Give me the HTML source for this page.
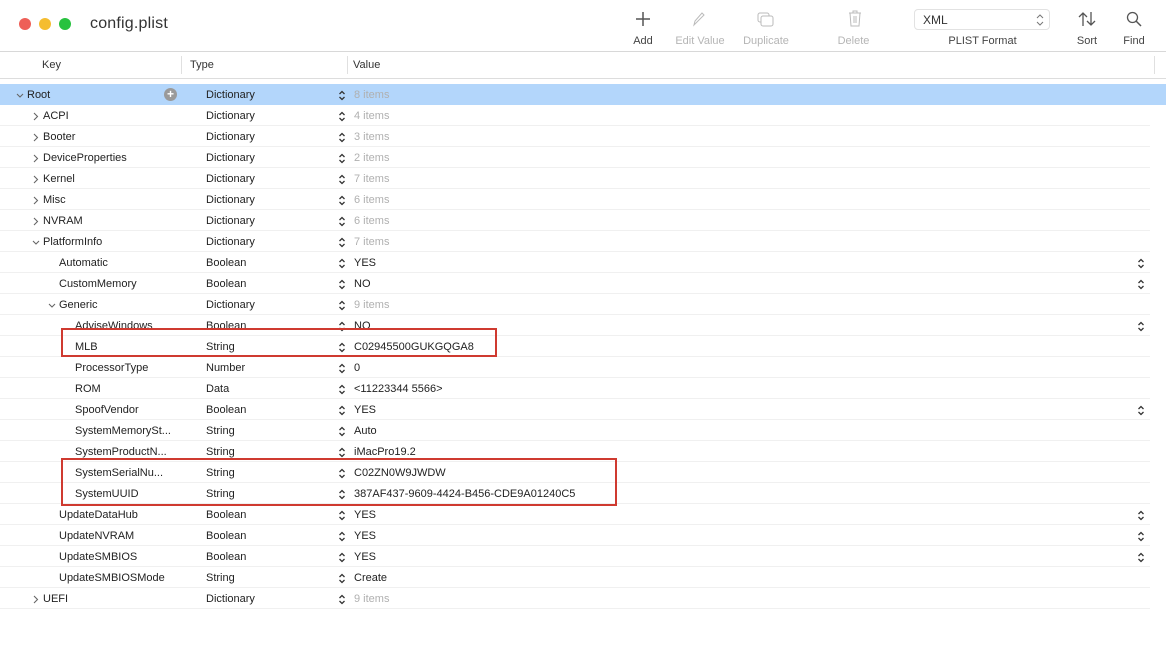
<!DOCTYPE html>
<html><head><meta charset="utf-8"><style>
*{margin:0;padding:0;box-sizing:border-box}
body{width:1166px;height:663px;background:#fff;font-family:"Liberation Sans",sans-serif;font-size:11px;color:#222;position:relative;overflow:hidden}
.a{position:absolute;white-space:nowrap}
.tb{position:absolute;left:0;top:0;width:1166px;height:52px;border-bottom:1px solid #d8d8d8;background:#fff}
.dot{position:absolute;top:18px;width:12px;height:12px;border-radius:50%}
.lbl{position:absolute;top:35px;font-size:11px;color:#444;text-align:center}
.dis{color:#b5b5b5}
.row{position:absolute;left:0;width:1150px;height:21px;border-bottom:1px solid #f0f0f0}
.row span{position:absolute;top:5px;white-space:nowrap}
.gray{color:#b0b0b0}
.red{position:absolute;border:2px solid #cf3a30}
</style></head><body>
<div class="tb">
<div class="dot" style="left:19px;background:#ee5f57"></div>
<div class="dot" style="left:39px;background:#f5bd30"></div>
<div class="dot" style="left:59px;background:#27c23f"></div>
<div class="a" style="left:90px;top:15px;font-size:16px;color:#333;letter-spacing:0.2px">config.plist</div>
<svg class="a" style="left:635px;top:11px" width="16" height="16"><path d="M8 1V15M1 8H15" stroke="#555" stroke-width="1.5"/></svg>
<svg class="a" style="left:690px;top:11px" width="16" height="16"><path d="M4 14L5 10L12 2L14 4L6 12Z" stroke="#bbb" fill="none"/></svg>
<svg class="a" style="left:757px;top:12px" width="18" height="16"><rect x="1" y="1" width="11" height="9" rx="2" stroke="#bbb" fill="none"/><rect x="4" y="4" width="12" height="10" rx="2" stroke="#bbb" fill="#fff"/></svg>
<svg class="a" style="left:847px;top:10px" width="16" height="18"><path d="M2 3H14M6 3V1H10V3M3 3L4 16H12L13 3M7 6V13M9 6V13" stroke="#bbb" fill="none"/></svg>
<div class="a" style="left:914px;top:9px;width:136px;height:21px;border:1px solid #e2e2e2;border-radius:4px;font-size:12px;padding:3px 0 0 8px;color:#333">XML</div>
<svg class="a" style="left:1036px;top:14px" width="8" height="12"><path d="M1 4L4 1L7 4M1 8L4 11L7 8" stroke="#777" fill="none"/></svg>
<svg class="a" style="left:1077px;top:11px" width="20" height="16"><path d="M6 15V2M2 6L6 2L10 6M14 1V14M10 10L14 14L18 10" stroke="#555" stroke-width="1.3" fill="none"/></svg>
<svg class="a" style="left:1126px;top:11px" width="16" height="16"><circle cx="6.5" cy="6.5" r="5" stroke="#555" stroke-width="1.3" fill="none"/><path d="M10 10L15 15" stroke="#555" stroke-width="1.5"/></svg>
<div class="lbl" style="left:623px;width:40px">Add</div>
<div class="lbl dis" style="left:670px;width:60px">Edit Value</div>
<div class="lbl dis" style="left:736px;width:60px">Duplicate</div>
<div class="lbl dis" style="left:826px;width:55px">Delete</div>
<div class="lbl" style="left:940px;width:85px">PLIST Format</div>
<div class="lbl" style="left:1067px;width:40px">Sort</div>
<div class="lbl" style="left:1114px;width:40px">Find</div>
</div>
<div class="a" style="left:0;top:52px;width:1166px;height:27px;border-bottom:1px solid #ddd"></div>
<div class="a" style="left:42px;top:59px;color:#333">Key</div>
<div class="a" style="left:181px;top:56px;width:1px;height:18px;background:#e0e0e0"></div>
<div class="a" style="left:190px;top:59px;color:#333">Type</div>
<div class="a" style="left:347px;top:56px;width:1px;height:18px;background:#e0e0e0"></div>
<div class="a" style="left:353px;top:59px;color:#333">Value</div>
<div class="a" style="left:1154px;top:56px;width:1px;height:18px;background:#e0e0e0"></div>
<div id="rows"></div>
<script>
var R=[
[0,'v','Root','Dictionary','8 items',1,0],
[1,'>','ACPI','Dictionary','4 items',1,0],
[1,'>','Booter','Dictionary','3 items',1,0],
[1,'>','DeviceProperties','Dictionary','2 items',1,0],
[1,'>','Kernel','Dictionary','7 items',1,0],
[1,'>','Misc','Dictionary','6 items',1,0],
[1,'>','NVRAM','Dictionary','6 items',1,0],
[1,'v','PlatformInfo','Dictionary','7 items',1,0],
[2,'','Automatic','Boolean','YES',0,1],
[2,'','CustomMemory','Boolean','NO',0,1],
[2,'v','Generic','Dictionary','9 items',1,0],
[3,'','AdviseWindows','Boolean','NO',0,1],
[3,'','MLB','String','C02945500GUKGQGA8',0,0],
[3,'','ProcessorType','Number','0',0,0],
[3,'','ROM','Data','<11223344 5566>',0,0],
[3,'','SpoofVendor','Boolean','YES',0,1],
[3,'','SystemMemorySt...','String','Auto',0,0],
[3,'','SystemProductN...','String','iMacPro19.2',0,0],
[3,'','SystemSerialNu...','String','C02ZN0W9JWDW',0,0],
[3,'','SystemUUID','String','387AF437-9609-4424-B456-CDE9A01240C5',0,0],
[2,'','UpdateDataHub','Boolean','YES',0,1],
[2,'','UpdateNVRAM','Boolean','YES',0,1],
[2,'','UpdateSMBIOS','Boolean','YES',0,1],
[2,'','UpdateSMBIOSMode','String','Create',0,0],
[1,'>','UEFI','Dictionary','9 items',1,0]];
var h='';
R.forEach(function(r,i){
var top=84+21*i;var lv=r[0];var tx=[27,43,59,75][lv];var cx=tx-11;
var bg=i==0?'background:#b3d6fb;width:1166px;border-bottom:none;':'';
h+='<div class="row" style="top:'+top+'px;'+bg+'">';
if(r[1]=='v')h+='<svg style="position:absolute;left:'+cx+'px;top:9px" width="8" height="6"><path d="M1 1L4 4L7 1" stroke="#666" fill="none" stroke-width="1.1"/></svg>';
if(r[1]=='>')h+='<svg style="position:absolute;left:'+(cx+1)+'px;top:7px" width="6" height="9"><path d="M1 1L4.5 4.5L1 8" stroke="#666" fill="none" stroke-width="1.1"/></svg>';
h+='<span style="left:'+tx+'px">'+r[2].replace('<','&lt;')+'</span>';
if(i==0)h+='<span style="left:164px;top:4px;width:13px;height:13px;border-radius:50%;background:#9a9a9a;color:#fff;font-size:12px;line-height:13px;text-align:center;font-weight:bold">+</span>';
h+='<span style="left:206px">'+r[3]+'</span>';
h+='<svg style="position:absolute;left:338px;top:6px" width="8" height="11"><path d="M1.5 4L4 1.5L6.5 4M1.5 7L4 9.5L6.5 7" stroke="#333" fill="none" stroke-width="1.3"/></svg>';
h+='<span style="left:354px" class="'+(r[5]?'gray':'')+'">'+r[4].replace('<','&lt;')+'</span>';
if(r[6])h+='<svg style="position:absolute;left:1137px;top:6px" width="8" height="11"><path d="M1.5 4L4 1.5L6.5 4M1.5 7L4 9.5L6.5 7" stroke="#333" fill="none" stroke-width="1.3"/></svg>';
h+='</div>';});
document.getElementById('rows').innerHTML=h;
</script>
<div class="red" style="left:61px;top:328px;width:436px;height:29px"></div>
<div class="red" style="left:61px;top:458px;width:556px;height:48px"></div>
</body></html>
